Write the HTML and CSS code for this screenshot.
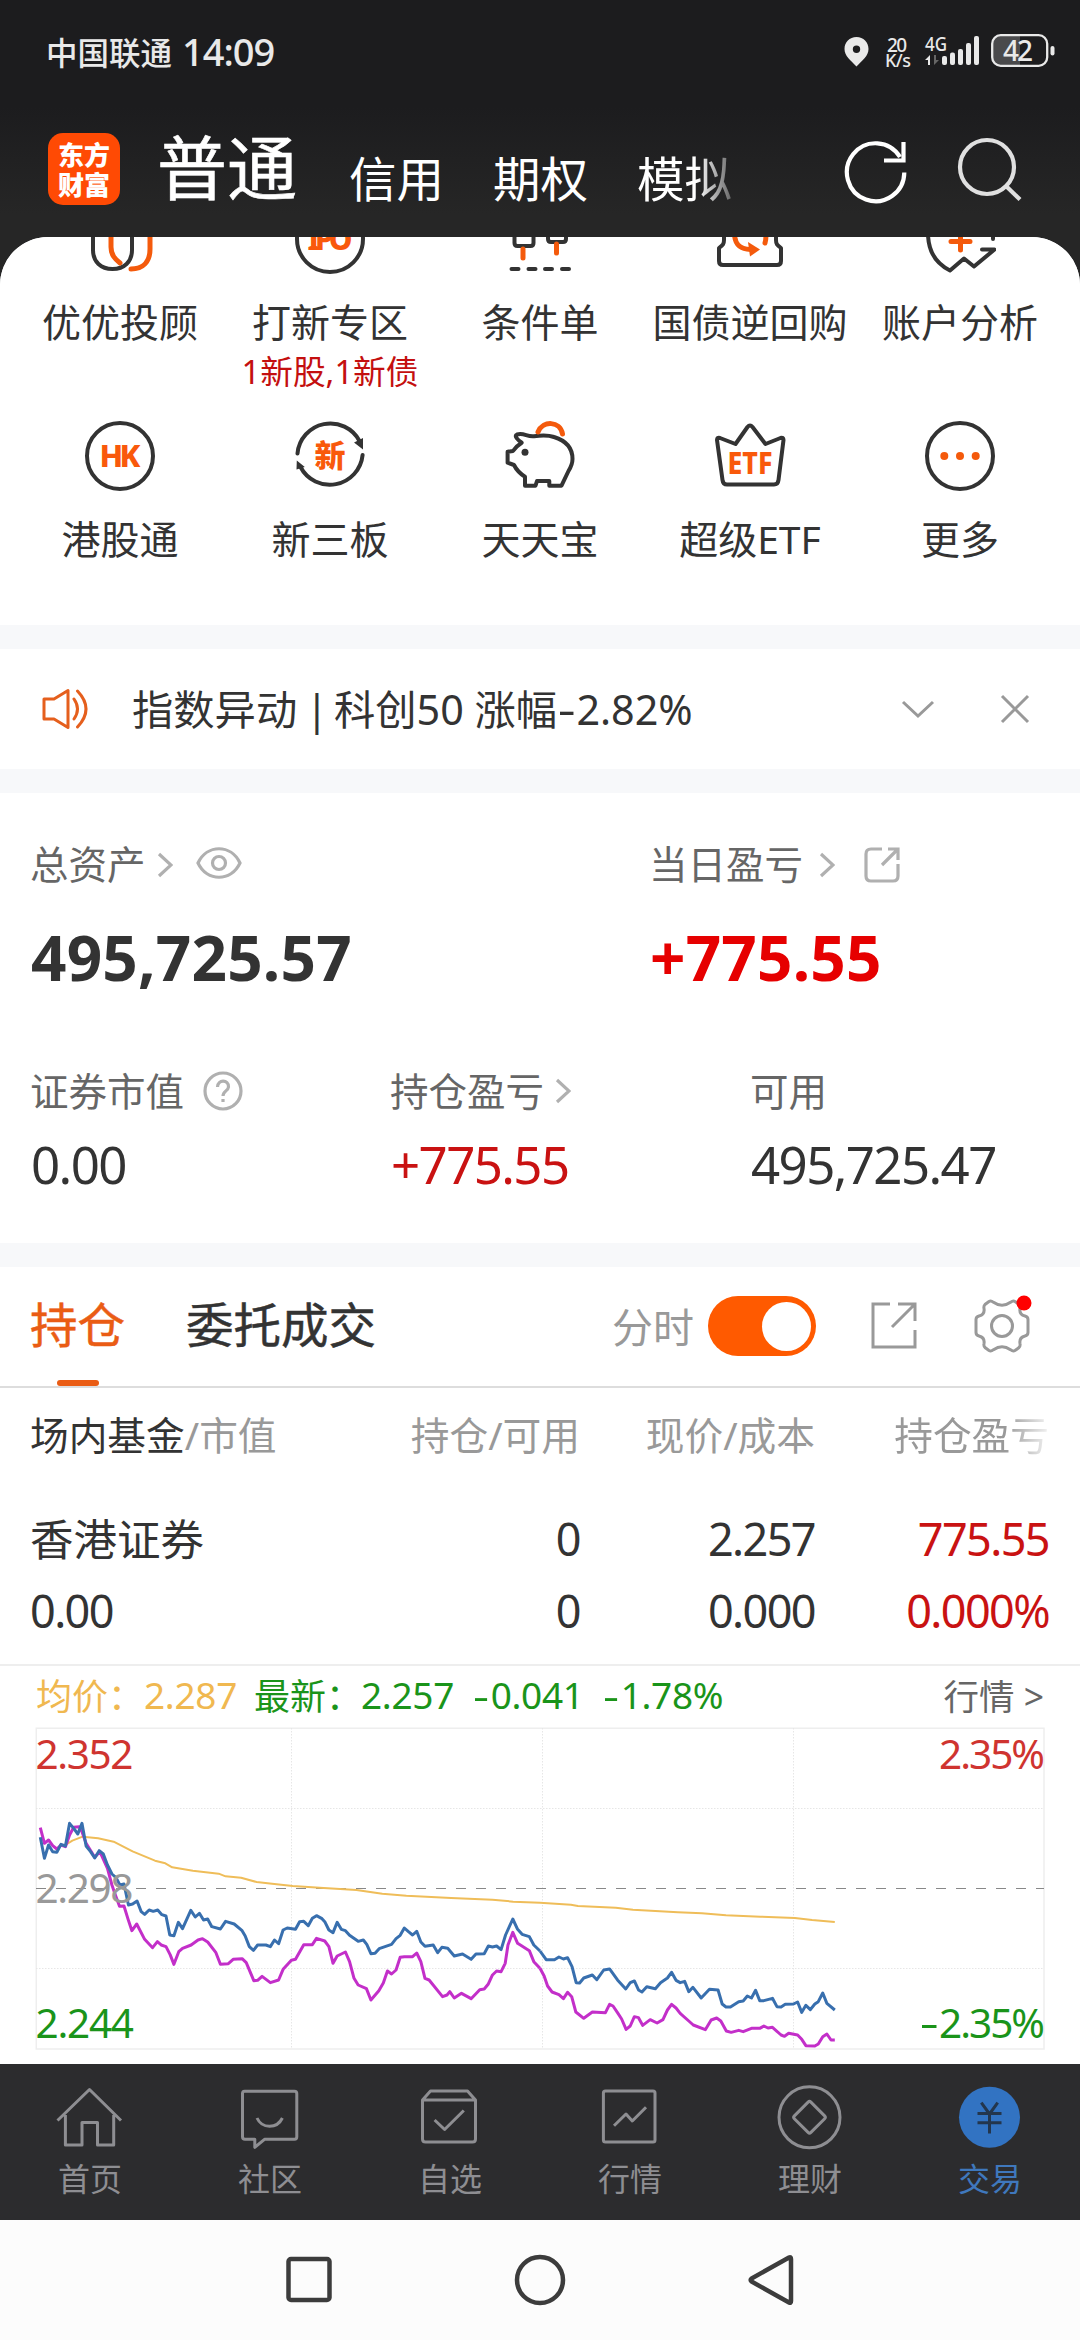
FILE: index.html
```html
<!DOCTYPE html>
<html lang="zh-CN">
<head>
<meta charset="utf-8">
<title>交易</title>
<link rel="stylesheet" href="styles.css">
</head>
<body>
<div class="phone">
  <header class="top">
    <div class="status">
      <span class="carrier">中国联通</span><span class="clock">14:09</span>
      <svg class="status-icons" width="216" height="40" viewBox="844 31 216 40">
        <path fill="#e9e9e9" fill-rule="evenodd" d="M856.500 37c-7 0-12 5-12 12 0 7 6 11 12 17.500 6-6.500 12-10.500 12-17.500 0-7-5-12-12-12zm0 8.500a3.700 3.700 0 1 1 0 7.400 3.700 3.700 0 0 1 0-7.400z"/>
        <g fill="#e9e9e9" class="tiny">
          <text x="887" y="51.500" font-size="19" textLength="20">20</text>
          <text x="885" y="67" font-size="18" textLength="26">K/s</text>
          <text x="925" y="50.500" font-size="20" textLength="22" lengthAdjust="spacingAndGlyphs">4G</text>
          <path d="M925 60l5-5v10h-2v-5z"/><path fill="#666" d="M934 55v10l5-5h-3v-5z"/>
          <rect x="942" y="56" width="5" height="9" rx="2"/><rect x="950" y="52.500" width="5" height="12.500" rx="2"/><rect x="958" y="49" width="5" height="16" rx="2"/><rect x="966" y="43" width="5" height="22" rx="2"/><rect x="974" y="36" width="5" height="29" rx="2"/>
        </g>
        <path fill="#4a4a4c" d="M1001 36h19v29h-19q-8 0-8-8V44q0-8 8-8z"/>
        <rect x="992.200" y="35.200" width="55" height="30.600" rx="8.500" fill="none" stroke="#e9e9e9" stroke-width="2.300"/>
        <rect x="1050.500" y="46" width="4" height="9.500" rx="2" fill="#e9e9e9"/>
        <text class="tiny" x="1003" y="60.500" font-size="28" textLength="30" fill="#e9e9e9">42</text>
      </svg>
    </div>
    <nav class="accounts">
      <div class="logo"><span>东方</span><span>财富</span></div>
      <span class="acct current">普通</span>
      <span class="acct a2">信用</span>
      <span class="acct a3">期权</span>
      <span class="acct a4 fading">模拟</span>
      <svg class="refresh" width="66" height="66" viewBox="0 0 66 66" fill="none" stroke="#fff" stroke-width="4.200"><path d="M61.300 34.500A28.700 29 0 1 1 57 19"/><path d="M60.500 4v18.500H41"/></svg>
      <svg class="search" width="66" height="66" viewBox="0 0 66 66" fill="none" stroke="#e0e0e0" stroke-width="4.200"><circle cx="31" cy="30" r="27"/><path d="M50 49l14 13.500"/></svg>
    </nav>
  </header>

  <main class="sheet">
    <section class="shortcuts">
      <div class="cut"><svg class="ico" viewBox="0 0 72 72"><path d="M9 30v17c0 12 8 19 19.500 19S48 59 48 47V30"/><path class="o" d="M27 30v14c0 8 4 12 9 16M66 30v16c0 13-7 20-19 20"/></svg><span>优优投顾</span></div>
      <div class="cut"><svg class="ico" viewBox="0 0 72 72"><circle cx="36" cy="36" r="33"/><text x="36" y="47" font-size="30" textLength="45">IPO</text></svg><span>打新专区</span><em>1新股,1新债</em></div>
      <div class="cut"><svg class="ico" viewBox="0 0 72 72"><path d="M10.500 30v10q0 3 3 3h13q3 0 3-3V30M44 30v6q0 3 3 3h12q3 0 3-3V30M7.500 66h7M24.500 66h7M41 66h7M58 66h7"/><path class="o" d="M19 46v9M52.500 41v9"/></svg><span>条件单</span></div>
      <div class="cut"><svg class="ico" viewBox="0 0 72 72"><path d="M10 25v12c0 4-1 5-5 8v13q0 4 4 4h54q4 0 4-4V45c-4-3-5-4-5-8V25"/><path class="o" d="M20.500 30c0 10 4 16 16 16.500M51.500 30q1 5-.5 10"/><path class="of" d="M34 39l12 7.500-10 7z"/></svg><span>国债逆回购</span></div>
      <div class="cut"><svg class="ico" viewBox="0 0 72 72"><path d="M4 30c0 20 9 31 22 37.500l14-12 10 8 20.500-17H58M69 28v8"/><path class="o" d="M27 38.500h19M36.500 30v17"/></svg><span>账户分析</span></div>

      <div class="cut"><svg class="ico" viewBox="0 0 72 72"><circle cx="36" cy="36" r="33"/><text x="36" y="47" font-size="31" textLength="41">HK</text></svg><span>港股通</span></div>
      <div class="cut"><svg class="ico" viewBox="0 0 72 72"><path d="M3.500 33.500A33 33 0 0 1 65.500 21M68.600 35A33 33 0 0 1 6.500 47"/><path class="bf" d="M69 18v11.500l-9-7zM2.800 40.500l8 6.500-8.300 2.500z"/><text x="36" y="47" font-size="31" class="heavy">新</text></svg><span>新三板</span></div>
      <div class="cut"><svg class="ico" viewBox="0 0 72 72"><path d="M17.700 22.700C14 20 9.500 16 13 14.500c7-2 10 2.500 17 1.700 7-1 15-1 20 .8 13 4 18.500 12 18.500 22 0 5-1.500 8-4 12L57.500 65.700H45.300V61H33l-1.500 4.700H21v-9C15 53 12 49 10 45l-6.400-2.300v-11L9 31c2-3 5-6 8.700-8.300z"/><circle class="bf" cx="21" cy="32.300" r="3.500"/><path class="o" d="M34 12c5-12 22-11 24.500 2"/></svg><span>天天宝</span></div>
      <div class="cut"><svg class="ico" viewBox="0 0 72 72"><path d="M3 20q0-3 3-2l15.500 6L33.500 7q2.500-3 5 0l13 17L66.500 18q3-1 3 2l-5 40q-.5 4.500-4.500 4.500H13q-4 0-4.500-4.500z"/><text x="36" y="53.500" font-size="31" textLength="45" lengthAdjust="spacingAndGlyphs">ETF</text></svg><span>超级ETF</span></div>
      <div class="cut"><svg class="ico" viewBox="0 0 72 72"><circle cx="36" cy="36" r="33"/><g class="of"><circle cx="20.300" cy="36" r="4"/><circle cx="36" cy="36" r="4"/><circle cx="51.700" cy="36" r="4"/></g></svg><span>更多</span></div>
    </section>

    <section class="notice">
      <svg width="48" height="42" viewBox="0 0 48 42" fill="none" stroke="#e55f1d" stroke-width="3" stroke-linejoin="round" stroke-linecap="round"><path d="M2 11h10L26 2.500v37L12 31H2zM32 11q7 10 0 20M35.500 3q17 18 0 36"/></svg>
      <p>指数异动<i class="bar"> | </i>科创50 涨幅<i class="dash">-</i>2.82%</p>
      <svg class="fold" width="34" height="20" viewBox="0 0 34 20"><path d="M2 3l15 14L32 3"/></svg>
      <svg class="close" width="30" height="30" viewBox="0 0 30 30"><path d="M2 2l26 26M28 2L2 28"/></svg>
    </section>

    <section class="assets">
      <div class="pair">
        <div>
          <div class="label"><span>总资产</span><svg class="chev" viewBox="0 0 16 26"><path d="M2 2l12 11L2 24"/></svg><svg class="eye" width="46" height="32" viewBox="0 0 46 32"><path d="M2 16C11-3 35-3 44 16 35 35 11 35 2 16z"/><circle cx="23" cy="16" r="6.500"/></svg></div>
          <div class="big">495,725.57</div>
        </div>
        <div>
          <div class="label"><span>当日盈亏</span><svg class="chev wide" viewBox="0 0 16 26"><path d="M2 2l12 11L2 24"/></svg><svg class="share-s" width="36" height="36" viewBox="0 0 36 36"><path d="M18 2H7Q2 2 2 7v22q0 5 5 5h22q5 0 5-5V17M24 2h10v11M33 3L18 18"/></svg></div>
          <div class="big up">+775.55</div>
        </div>
      </div>
      <div class="trio">
        <div><div class="label"><span>证券市值</span><svg class="help" width="40" height="40" viewBox="0 0 40 40"><circle cx="20" cy="20" r="18"/><path d="M14.500 16c0-8 11.500-7.500 11 0-.3 4-5.500 4-5.500 9M20 28v3"/></svg></div><div class="val">0.00</div></div>
        <div><div class="label"><span>持仓盈亏</span><svg class="chev low" viewBox="0 0 16 26"><path d="M2 2l12 11L2 24"/></svg></div><div class="val red">+775.55</div></div>
        <div><div class="label"><span>可用</span></div><div class="val">495,725.47</div></div>
      </div>
    </section>

    <section class="holdings">
      <div class="tabs">
        <span class="tab on">持仓</span>
        <span class="tab">委托成交</span>
        <span class="minute">分时</span>
        <span class="switch"><i></i></span>
        <svg class="share" width="48" height="48" viewBox="0 0 48 48"><path d="M20 2H3v43h42V28M28 2h17v17M44 3L22 25"/></svg>
        <svg class="gear" width="60" height="64" viewBox="0 0 60 64"><path d="M17 7.500l-4 3q-1.500 1.500-1 4 1 6-5 7.500-3 .7-3 3.500v13q0 2.800 3 3.500 6 1.500 5 7.500-.5 2.500 1 4l4 3q2 1.200 4.500-.8 8.500-6 17 0 2.500 2 4.500.8l4-3q1.500-1.500 1-4-1-6 5-7.500 3-.7 3-3.500v-13q0-2.800-3-3.500-6-1.500-5-7.500.5-2.500-1-4l-4-3q-2-1.200-4.500.8-8.500 6-17 0-2.500-2-4.500-.8z"/><circle cx="30" cy="32" r="10.500"/><circle class="dot" cx="52" cy="9" r="7.500"/></svg>
      </div>
      <div class="cols head">
        <span><b>场内基金</b>/市值</span><span>持仓/可用</span><span>现价/成本</span><span class="fade-last">持仓盈亏</span>
      </div>
      <div class="cols row first"><span class="name">香港证券</span><span>0</span><span>2.257</span><span class="red">775.55</span></div>
      <div class="cols row second"><span>0.00</span><span>0</span><span>0.000</span><span class="red">0.000%</span></div>
    </section>

    <section class="chart">
      <div class="legend">
        <span class="avg">均价：</span><span class="avg n n1">2.287</span><span class="dn">最新：</span><span class="dn n n2">2.257</span><span class="dn n n3"><i class="dash">-</i>0.041</span><span class="dn n n4"><i class="dash">-</i>1.78%</span><span class="more">行情 &gt;</span>
      </div>
      <svg class="plot" width="1080" height="337" viewBox="0 0 1080 337">
        <path stroke="#eee" stroke-width="1.500" fill="none" d="M36.300 1.200H1044V322H36.300z"/>
        <path stroke="#e6e6e6" stroke-width="1" stroke-dasharray="1.500 1.500" fill="none" d="M36 81.500H1044M36 241.500H1044M291.500 1V322M542.500 1V322M793.500 1V322"/>
        <path stroke="#888" stroke-width="1.200" stroke-dasharray="10 10" fill="none" d="M36 161.500H1044"/>
        <g transform="scale(.34439 .33333) translate(0 -231)" class="series">
          <polyline class="y" points="190,585 210,572 240,560 285,565 330,575 385,604 450,632 480,640 500,652 560,662 635,671 655,679 700,683 745,696 790,701 850,708 940,714 1035,720 1110,731 1180,737 1310,744 1430,749 1490,755 1568,758"/>
          <polyline class="m" points="117,533 129,580 141,570 153,587 165,597 177,585 190,590 202,555 214,532 230,530 238,545 250,580 275,622 290,605 312,655 325,705 335,735 347,769 360,768 372,808 383,842 397,822 420,868 443,893 457,875 468,885 482,890 494,914 505,943 519,905 530,895 555,885 575,870 588,866 603,876 627,908 640,943 663,941 677,928 703,926 715,938 737,992 748,991 761,979 785,998 809,990 822,958 846,931 858,928 882,884 907,884 919,865 943,873 955,890 967,940 979,918 1003,906 1015,935 1028,985 1040,1005 1064,1016 1077,1050 1100,1022 1113,999 1125,963 1137,972 1150,960 1162,922 1174,920 1198,920 1210,909 1222,935 1234,985 1246,990 1285,1040 1298,1035 1306,1025 1319,1044 1340,1030 1368,1046 1393,1019 1406,1017 1418,1002 1430,975 1442,963 1455,965 1467,940 1475,885 1489,847 1503,880 1537,902 1550,935 1568,955"/>
          <polyline class="b" points="117,562 129,625 141,585 153,605 165,607 177,583 190,588 202,520 214,535 226,552 238,520 250,588 263,605 275,624 288,602 300,612 312,645 325,672 337,683 348,705 360,702 373,765 385,762 398,753 410,785 420,793 433,780 445,784 458,780 470,794 482,798 493,855 505,857 518,817 530,836 554,781 567,801 579,790 591,810 603,807 615,830 640,837 655,814 680,822 703,842 712,858 724,890 736,901 748,885 772,885 785,890 797,870 809,881 822,840 834,834 858,838 870,815 882,814 895,827 907,805 919,797 935,806 943,815 955,840 967,848 979,817 991,838 1003,842 1015,856 1040,874 1055,870 1065,883 1077,911 1089,910 1101,896 1137,883 1150,866 1162,856 1174,834 1186,845 1198,855 1210,844 1222,876 1234,889 1258,885 1271,908 1283,892 1300,895 1319,918 1343,912 1368,928 1382,912 1406,911 1418,888 1430,891 1442,888 1455,899 1468,855 1489,807 1503,838 1516,853 1537,860 1550,885 1568,903"/>
          <g transform="translate(1568)">
            <polyline class="y" points="0,758 90,764 110,768 220,773 270,779 400,787 470,790 540,796 640,800 740,804 790,810 856,816"/>
            <polyline class="m" points="0,955 12,978 22,1008 35,1026 55,1034 68,1046 80,1027 92,1040 104,1086 127,1105 152,1086 190,1088 202,1063 212,1068 225,1088 237,1107 250,1138 262,1128 274,1100 286,1103 298,1126 320,1109 340,1119 357,1109 370,1080 382,1063 395,1074 407,1090 432,1113 445,1125 480,1139 497,1110 513,1104 525,1113 541,1143 555,1147 577,1141 590,1145 614,1135 638,1135 650,1128 662,1134 675,1132 700,1155 710,1159 722,1150 748,1155 760,1168 772,1187 798,1188 808,1182 821,1160 833,1152 845,1170 856,1170"/>
            <polyline class="b" points="0,903 18,929 42,929 55,921 68,927 80,923 93,950 105,998 115,999 127,984 152,975 165,989 185,960 202,957 225,990 249,1017 262,998 274,993 286,1020 296,1026 310,1010 335,1016 350,998 370,984 382,967 395,991 407,998 420,994 432,1025 444,1012 468,1044 492,1018 517,1020 529,1062 540,1071 553,1071 577,1055 590,1053 602,1038 614,1044 626,1021 638,1052 650,1052 675,1045 688,1070 700,1071 712,1063 736,1062 748,1056 760,1087 772,1066 785,1079 798,1062 808,1055 821,1029 833,1060 856,1080"/>
          </g>
        </g>
        <g class="axis">
          <text x="35.500" y="42" textLength="98" fill="#cf3430">2.352</text>
          <text x="35.500" y="176" textLength="98" fill="#999">2.298</text>
          <text x="35.500" y="311" textLength="98.500" fill="#1a941a">2.244</text>
          <text x="939" y="42" textLength="106" fill="#cf3430">2.35%</text>
          <text x="939" y="311" textLength="106" fill="#1a941a">2.35%</text>
          <path d="M922 299.500h14.500" stroke="#1a941a" stroke-width="3"/>
        </g>
      </svg>
    </section>
  </main>

  <nav class="tabbar">
    <div class="item"><svg class="nav" viewBox="0 0 72 72"><path d="M3.500 39.500L35.500 8.500 67 39.500M11.400 34v30H28V41.500h15.500V64h16.200V34"/></svg><span>首页</span></div>
    <div class="item"><svg class="nav" viewBox="0 0 72 72"><path d="M10.500 10.300h50q2.300 0 2.300 2.500v43q0 2.500-2.300 2.500h-30l-9.700 8v-8H11q-2.500 0-2.500-2.500v-43q0-2.500 2-2.500zM23 37c5 11 20 11 25.400 0"/></svg><span>社区</span></div>
    <div class="item"><svg class="nav" viewBox="0 0 72 72"><path d="M8.500 19l8-9h37l8 9v39q0 3-3 3h-47q-3 0-3-3zh53M20.600 39l10 9.500 19.200-19"/></svg><span>自选</span></div>
    <div class="item"><svg class="nav" viewBox="0 0 72 72"><rect x="9.400" y="10" width="51.600" height="51" rx="2"/><path d="M20 44.700L32 33l6.300 7L52 26.300"/></svg><span>行情</span></div>
    <div class="item"><svg class="nav" viewBox="0 0 72 72"><circle cx="35.500" cy="36.300" r="30.500"/><rect x="23.800" y="24.600" width="23.400" height="23.400" rx="2" transform="rotate(45 35.500 36.300)"/></svg><span>理财</span></div>
    <div class="item active"><svg class="nav" viewBox="0 0 72 72"><circle cx="35.500" cy="36.300" r="30.500" fill="#3273c2" stroke="none"/><path stroke="#23364d" d="M27.300 21.700L35.500 33l8.200-11.300M23.500 32.500h24M23.500 41.700h24M35.500 33v19.500"/></svg><span>交易</span></div>
  </nav>
  <footer class="sysbar">
    <svg width="50" height="54" viewBox="0 0 50 54"><rect x="4.500" y="6" width="41" height="41" rx="2.500"/></svg>
    <svg width="54" height="54" viewBox="0 0 54 54"><circle cx="27" cy="27" r="23"/></svg>
    <svg width="50" height="54" viewBox="0 0 50 54"><path d="M43 4.500Q45 3.500 45 6v42q0 2.500-2 1.500L5.500 28.500Q4 27 5.500 25.500z"/></svg>
  </footer>
</div>
</body>
</html>
```
FILE: styles.css
```css
* { box-sizing: border-box; }
body { margin: 0; font-family: "Noto Sans", "Noto Sans CJK SC", sans-serif; color: #333; }
.phone { width: 1080px; height: 2340px; display: flex; flex-direction: column; background: #262626; overflow: hidden; }
i, em { font-style: normal; }
svg { display: block; flex: none; }

.top { height: 237px; flex: none; background: linear-gradient(#1c1c1e 45%, #262626 90%); color: #fff; }
.status { height: 101px; padding: 0 20px 0 46px; display: flex; align-items: center; color: #e9e9e9; font-weight: 500; }
.carrier { font-size: 31.5px; width: 136px; }
.clock { font-size: 38px; letter-spacing: -1px; }
.status-icons { margin-left: auto; }
.tiny { font-weight: 500; }
.accounts { height: 136px; padding: 1px 0 0 48px; display: flex; align-items: flex-start; white-space: nowrap; }
.logo { width: 72px; height: 72px; margin-top: 31px; border-radius: 15px; background: #ff4a04; display: flex; flex-direction: column; align-items: center; justify-content: center; font: 900 26px/30px "Noto Sans CJK SC", sans-serif; }
.acct { font-size: 47.5px; line-height: 66px; margin-top: 44px; }
.current { font-size: 70px; line-height: 100px; margin: 16px 0 0 37px; width: 192px; -webkit-text-stroke: .6px #fff; }
.a2 { width: 144px; }
.a3 { width: 144px; }
.a4 { width: 204px; }
.fading { -webkit-mask-image: linear-gradient(90deg, #000 60px, transparent 110px); mask-image: linear-gradient(90deg, #000 60px, transparent 110px); }
.refresh { margin: 36px 0 0 2px; }
.search { margin: 35px 0 0 47px; }

.sheet { height: 1827px; flex: none; background: #f7f8fa; border-radius: 48px 48px 0 0; overflow: hidden; }
.shortcuts { height: 422px; margin-top: -34px; background: #fff; padding: 0 15px; display: grid; grid-template-columns: repeat(5, 210px); grid-template-rows: 217px 217px; align-content: start; }
.cut { display: flex; flex-direction: column; align-items: center; font-size: 39px; line-height: 60px; white-space: nowrap; }
.cut span { margin-top: 17px; }
.cut em { font-size: 32.7px; line-height: 40px; margin-top: 0; color: #c40f0f; }
.ico { width: 72px; height: 72px; fill: none; stroke: #333; stroke-width: 4; stroke-linecap: round; stroke-linejoin: round; }
.ico .o { stroke: #f45a0c; stroke-width: 5; }
.ico .of { fill: #f45a0c; stroke: none; }
.ico .bf { fill: #333; stroke: none; }
.ico text { fill: #f9590b; stroke: none; font-weight: 800; text-anchor: middle; }
.ico .heavy { font-family: "Noto Sans CJK SC"; font-weight: 900; }

.notice { height: 120px; margin-top: 24px; padding: 0 50px 0 42px; background: #fff; display: flex; align-items: center; }
.notice p { margin: 0 auto 0 42px; font-size: 41.3px; line-height: 60px; white-space: pre; }
.bar { letter-spacing: -2.5px; }
.dash { display: inline-block; transform: scaleX(1.35); margin: 0 3px; }
.notice .fold, .notice .close { fill: none; stroke: #999; stroke-width: 3; }
.notice .close { margin-left: 65px; }

.assets { height: 450px; margin-top: 24px; padding: 40px 31px 0; background: #fff; }
.pair { display: grid; grid-template-columns: 619px 1fr; }
.trio { display: grid; grid-template-columns: 360px 360px 1fr; margin-top: 62px; }
.label { height: 60px; display: flex; align-items: center; font-size: 38.5px; color: #666; white-space: nowrap; }
.label span { margin: -3px 0 0 -1px; }
.trio .label span { margin-top: -1px; }
.label svg { fill: none; stroke: #b0b0b0; stroke-width: 3.2; }
.chev { width: 16px; height: 26px; margin: 3px 0 0 11px; }
.chev.wide { margin-left: 16px; }
.eye { margin-left: 23px; }
.share-s { margin: 4px 0 0 29px; }
.help { margin: 4px 0 0 19px; }
.big { font-size: 62px; line-height: 80px; margin-top: 24px; font-weight: 700; letter-spacing: .2px; }
.up { color: #e60000; }
.val { font-size: 51px; line-height: 60px; margin-top: 15px; letter-spacing: -1.6px; }
.red { color: #c91212; }

.holdings { height: 397px; margin-top: 24px; background: #fff; }
.tabs { height: 121px; padding: 0 0 1px 30px; border-bottom: 2px solid #ddd; display: flex; align-items: center; }
.tab { font-size: 47.5px; line-height: 66px; width: 156px; margin-top: -3px; white-space: nowrap; -webkit-text-stroke: .5px; }
.tab.on { color: #ea5c14; position: relative; }
.tab.on::after { content: ""; position: absolute; left: 27px; bottom: -28px; width: 42px; height: 6px; border-radius: 3px; background: #ea5c14; }
.minute { margin: -3px 0 0 270px; width: 96px; font-size: 41px; color: #999; }
.switch { width: 108px; height: 60px; border-radius: 30px; background: #ff5a00; display: flex; justify-content: flex-end; align-items: center; padding-right: 5px; }
.switch i { width: 49px; height: 49px; border-radius: 50%; background: #fff; }
.tabs svg { fill: none; stroke: #999; stroke-width: 3; }
.share { margin-left: 54px; }
.gear { margin-left: 54px; }
.gear .dot { fill: #f00; stroke: none; }
.cols { display: grid; grid-template-columns: 301px 249px 235px 234px; padding-left: 30px; text-align: right; white-space: nowrap; }
.cols span:first-child { text-align: left; }
.head { height: 95px; line-height: 95px; font-size: 38.7px; color: #999; }
.head b { color: #333; font-weight: 400; }
.fade-last { -webkit-mask-image: linear-gradient(90deg, #000 190px, transparent 240px); mask-image: linear-gradient(90deg, #000 190px, transparent 240px); }
.row { height: 72px; line-height: 72px; font-size: 45px; letter-spacing: -1.6px; }
.row.first { margin-top: 20px; }
.row .name { font-size: 43.5px; letter-spacing: 0; }

.chart { height: 400px; border-top: 2px solid #eee; background: #fff; }
.legend { height: 61px; padding: 0 36px 4px; display: flex; align-items: center; font-size: 36px; white-space: pre; }
.legend .dash { margin: 0 4px 0 2px; }
.avg { color: #f0b850; width: 108px; }
.dn { color: #1a941a; width: 107px; }
.n { font-size: 37px; letter-spacing: -.3px; }
.n1 { width: 110px; }
.n2 { width: 112px; }
.n3 { width: 130px; }
.n4 { width: 130px; }
.more { margin-left: auto; color: #666; font-size: 35.5px; }
.series { fill: none; stroke-linejoin: round; }
.series polyline { vector-effect: non-scaling-stroke; }
.y { stroke: #efbd59; stroke-width: 2; }
.m { stroke: #c32fc9; stroke-width: 3; }
.b { stroke: #386fae; stroke-width: 3; }
.axis { font-size: 40.5px; }

.tabbar { height: 156px; flex: none; background: #2c2c2e; display: grid; grid-template-columns: repeat(6, 180px); }
.item { display: flex; flex-direction: column; align-items: center; padding-top: 17px; font-size: 32px; line-height: 40px; color: #8e8e92; }
.item span { margin-top: 6px; }
.item.active { color: #3f78bd; }
.nav { width: 72px; height: 72px; fill: none; stroke: #8e8e92; stroke-width: 3; stroke-linejoin: round; }
.sysbar { height: 120px; flex: none; background: #fcfcfc; display: flex; align-items: center; justify-content: center; gap: 179px; }
.sysbar svg { fill: none; stroke: #3c3c3c; stroke-width: 4.5; }
```
